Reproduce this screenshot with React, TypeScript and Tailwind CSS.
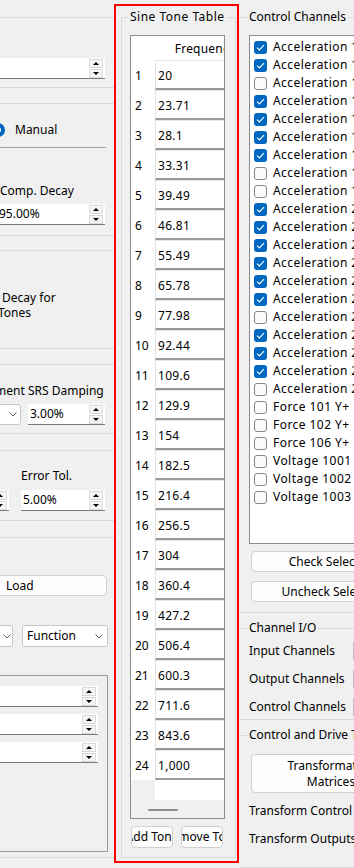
import React from "react";

const tones = [
  "20", "23.71", "28.1", "33.31", "39.49", "46.81", "55.49", "65.78",
  "77.98", "92.44", "109.6", "129.9", "154", "182.5", "216.4", "256.5",
  "304", "360.4", "427.2", "506.4", "600.3", "711.6", "843.6", "1,000",
];

const channels: [string, boolean][] = [
  ["Acceleration 101 Y+", true],
  ["Acceleration 102 Y+", true],
  ["Acceleration 103 Y+", false],
  ["Acceleration 104 Y+", true],
  ["Acceleration 105 Y+", true],
  ["Acceleration 106 Y+", true],
  ["Acceleration 107 Y+", true],
  ["Acceleration 108 Y+", false],
  ["Acceleration 109 Y+", false],
  ["Acceleration 201 Y+", true],
  ["Acceleration 202 Y+", true],
  ["Acceleration 203 Y+", true],
  ["Acceleration 204 Y+", true],
  ["Acceleration 205 Y+", true],
  ["Acceleration 206 Y+", true],
  ["Acceleration 207 Y+", false],
  ["Acceleration 208 Y+", true],
  ["Acceleration 209 Y+", true],
  ["Acceleration 210 Y+", true],
  ["Acceleration 211 Y+", false],
  ["Force 101 Y+", false],
  ["Force 102 Y+", false],
  ["Force 106 Y+", false],
  ["Voltage 1001 Y+", false],
  ["Voltage 1002 Y+", false],
  ["Voltage 1003 Y+", false],
];

function HLine({ className = "" }: { className?: string }) {
  return <div className={`h-px shrink-0 bg-[#d9d9d9] ${className}`} />;
}

function SpinButtons() {
  return (
    <div className="flex flex-col gap-px pr-[2px] pt-px">
      <div className="flex h-[9px] w-[14px] items-center justify-center border border-[#dadada] bg-[#f4f4f4]">
        <div className="h-0 w-0 border-x-[3px] border-b-[3px] border-x-transparent border-b-black" />
      </div>
      <div className="flex h-[9px] w-[14px] items-center justify-center border border-[#dadada] bg-[#f4f4f4]">
        <div className="h-0 w-0 border-x-[3px] border-t-[3px] border-x-transparent border-t-black" />
      </div>
    </div>
  );
}

function SpinBox({ value = "", className = "", textClass = "pl-[2px]" }: { value?: string; className?: string; textClass?: string }) {
  return (
    <div className={`flex h-[21px] shrink-0 border-b border-[#7a7a7a] bg-white ${className}`}>
      <span className={`flex-1 overflow-hidden whitespace-nowrap leading-[20px] ${textClass}`}>{value}</span>
      <SpinButtons />
    </div>
  );
}

function Chevron() {
  return (
    <svg width="8" height="5" viewBox="0 0 8 5">
      <path d="M0.5 0.5 L4 4 L7.5 0.5" fill="none" stroke="#606060" strokeWidth="1" />
    </svg>
  );
}

function Check({ on }: { on: boolean }) {
  if (on) {
    return (
      <span className="flex h-[13px] w-[13px] shrink-0 items-center justify-center rounded-[3px] bg-[#0067c0]">
        <svg width="9" height="7" viewBox="0 0 9 7">
          <path d="M1 3.6 L3.4 6 L8 1.2" fill="none" stroke="#ffffff" strokeWidth="1.1" />
        </svg>
      </span>
    );
  }
  return <span className="h-[13px] w-[13px] shrink-0 rounded-[3px] border border-[#868686] bg-[#fbfbfb]" />;
}

function WinButton({ children, className = "" }: { children: React.ReactNode; className?: string }) {
  return (
    <div className={`flex shrink-0 items-center justify-center overflow-hidden whitespace-nowrap rounded-[4px] border border-[#d0d0d0] bg-[#fdfdfd] ${className}`}>
      {children}
    </div>
  );
}

function LeftPanel() {
  return (
    <div className="flex w-[114px] shrink-0 flex-col overflow-hidden">
      <HLine className="mt-[17px]" />
      <SpinBox className="mt-[40px] w-[105px]" />
      <HLine className="mt-[8px]" />
      <HLine className="mt-[15px]" />

      <div className="mt-[19px] flex h-[14px] items-center">
        <div className="-ml-[9px] flex h-[14px] w-[14px] shrink-0 items-center justify-center rounded-full bg-[#0067c0]">
          <div className="h-[6px] w-[6px] rounded-full bg-white" />
        </div>
        <span className="ml-[10px] leading-[14px]">Manual</span>
      </div>
      <div className="mt-[10px] h-px w-[106px] shrink-0 bg-[#a0a0a0]" />

      <div className="mt-[35px] whitespace-nowrap">Comp. Decay</div>
      <SpinBox className="mt-[5px] w-[105px]" value="95.00%" textClass="-ml-px" />
      <HLine className="mt-[10px]" />
      <HLine className="mt-[14px]" />

      <div className="mt-[39px] whitespace-nowrap leading-[15px]">
        <div className="pl-[2px]">Decay for</div>
        <div className="-ml-[2px]">Tones</div>
      </div>
      <HLine className="mt-[28px]" />
      <HLine className="mt-[15px]" />

      <div className="mt-[18px] flex whitespace-nowrap">
        <span className="-ml-[5px] w-[33px] shrink-0">ment</span>
        <span>SRS Damping</span>
      </div>
      <div className="mt-[5px] flex h-[21px] shrink-0">
        <div className="-ml-[40px] flex w-[61px] shrink-0 items-center justify-end rounded-[3px] border border-[#c6c6c6] bg-white pr-[3px]">
          <Chevron />
        </div>
        <SpinBox className="ml-[7px] w-[77px]" value="3.00%" />
      </div>
      <HLine className="mt-[8px]" />
      <HLine className="mt-[16px]" />

      <div className="mt-[17px] pl-[21px] whitespace-nowrap">Error Tol.</div>
      <div className="mt-[6px] flex">
        <SpinBox className="-ml-[50px] w-[59px]" />
        <SpinBox className="ml-[12px] w-[84px]" value="5.00%" />
      </div>
      <HLine className="mt-[9px]" />
      <HLine className="mt-[16px]" />

      <div className="-ml-[20px] mt-[37px] flex h-[21px] w-[127px] shrink-0 items-center rounded-[4px] border border-[#d0d0d0] bg-[#fdfdfd] pl-[25px]">
        Load
      </div>

      <div className="mt-[29px] flex h-[22px] shrink-0">
        <div className="-ml-[40px] flex w-[53px] shrink-0 items-center justify-end rounded-[3px] border border-[#c6c6c6] bg-white pr-px">
          <Chevron />
        </div>
        <div className="ml-[9px] flex w-[86px] shrink-0 items-center justify-between rounded-[3px] border border-[#c6c6c6] bg-white pl-[4px] pr-[4px]">
          <span>Function</span>
          <Chevron />
        </div>
      </div>

      <div className="mt-[28px] flex h-[177px] w-[108px] shrink-0 flex-col items-end gap-[7px] border-y border-r border-[#999999] pr-[9px] pt-[10px]">
        <SpinBox className="w-[120px]" />
        <SpinBox className="w-[120px]" />
        <SpinBox className="w-[120px]" />
      </div>
      <HLine className="mt-[5px]" />
    </div>
  );
}

function ToneTable() {
  return (
    <div className="h-[784px] w-[95px] overflow-hidden border border-[#8c8c8c] bg-white">
      <div className="flex h-[24px] w-[124px]">
        <div className="w-[24px] shrink-0 bg-white" />
        <div className="w-[100px] shrink-0 pt-px text-center leading-[24px] tracking-[0.2px]">Frequency</div>
      </div>
      {tones.map((t, i) => (
        <div key={i} className="flex h-[30px] w-[124px]">
          <div className="h-[30px] w-[24px] shrink-0 bg-white pl-[4px] pt-px leading-[30px]">{i + 1}</div>
          <div className="h-[30px] w-[100px] shrink-0 overflow-hidden border-b-2 border-l border-t border-b-[#9a9a9a] border-l-[#e2e2e2] border-t-[#e6e6e6] bg-white pl-[2px] pt-[2px] leading-[25px] tracking-[0.3px]">
            {t}
          </div>
        </div>
      ))}
      <div className="flex h-[20px] w-[124px]">
        <div className="w-[24px] shrink-0 bg-[#f0f0f0]" />
        <div className="w-[100px] shrink-0 bg-white" />
      </div>
      <div className="h-[18px] bg-[#f0f0f0] pl-[17px] pt-[9px]">
        <div className="h-[2px] w-[30px] rounded-full bg-[#8a8a8a]" />
      </div>
    </div>
  );
}

function MiddlePanel() {
  return (
    <div className="mt-[4px] h-[859px] w-[125px] shrink-0 border-2 border-[#ff0000]">
      <fieldset className="ml-[5px] mt-[3px] w-[113px] border border-[#d9d9d9] px-[8px] pb-[9px] pt-[10px]">
        <legend className="-ml-[2px] whitespace-nowrap px-[2px] leading-[16px] tracking-[0.5px]">Sine Tone Table</legend>
        <ToneTable />
        <div className="mt-[7px] flex gap-[8px] pl-px">
          <WinButton className="h-[22px] w-[42px]">Add Tone</WinButton>
          <WinButton className="h-[22px] w-[42px]">Remove Tone</WinButton>
        </div>
      </fieldset>
    </div>
  );
}

function RightPanel() {
  return (
    <div className="min-w-0 flex-1 overflow-hidden">
      <div className="ml-[1px] w-[300px]">
        <fieldset className="mt-[9px] border-y border-x-0 border-[#d9d9d9] pb-[10px] pl-[9px] pt-[10px]">
          <legend className="-ml-[2px] whitespace-nowrap px-[2px] leading-[16px]">Control Channels</legend>
          <div className="h-[509px] w-[220px] border border-[#8c8c8c] bg-white pl-[4px] pt-[2px]">
            {channels.map(([name, on], i) => (
              <div key={i} className="flex h-[18px] items-center gap-[6px] whitespace-nowrap">
                <Check on={on} />
                <span className="tracking-[0.45px]">{name}</span>
              </div>
            ))}
          </div>
          <WinButton className="ml-[2px] mt-[7px] h-[21px] w-[160px]">Check Selected</WinButton>
          <WinButton className="ml-[2px] mt-[9px] h-[21px] w-[160px]">Uncheck Selected</WinButton>
        </fieldset>

        <fieldset className="mt-[7px] border-y border-x-0 border-[#d9d9d9] pb-[4px] pl-[9px] pt-[7px]">
          <legend className="-ml-[2px] whitespace-nowrap px-[2px] leading-[16px]">Channel I/O</legend>
          <div className="flex flex-col gap-[12px]">
            {["Input Channels", "Output Channels", "Control Channels"].map((l) => (
              <div key={l} className="flex h-[16px] items-center whitespace-nowrap">
                <span className="w-[104px] shrink-0">{l}</span>
                <div className="h-[18px] w-[60px] shrink-0 border border-[#bdbdbd] bg-white" />
              </div>
            ))}
          </div>
        </fieldset>

        <fieldset className="mt-[7px] border-y border-x-0 border-[#d9d9d9] pb-[20px] pl-[9px] pt-[11px]">
          <legend className="-ml-[2px] whitespace-nowrap px-[2px] leading-[16px]">Control and Drive Transformations</legend>
          <WinButton className="ml-[2px] h-[39px] w-[160px] text-center leading-[16px]">
            <span>
              Transformation
              <br />
              Matrices
            </span>
          </WinButton>
          <div className="mt-[10px] whitespace-nowrap">Transform Control Signals</div>
          <div className="mt-[12px] whitespace-nowrap">Transform Outputs</div>
        </fieldset>
      </div>
    </div>
  );
}

export default function App() {
  return (
    <div className="flex h-[868px] w-[354px] overflow-hidden bg-[#f0f0f0] font-['Noto_Sans',sans-serif] text-[12px] leading-[16px] text-black">
      <LeftPanel />
      <MiddlePanel />
      <RightPanel />
    </div>
  );
}
